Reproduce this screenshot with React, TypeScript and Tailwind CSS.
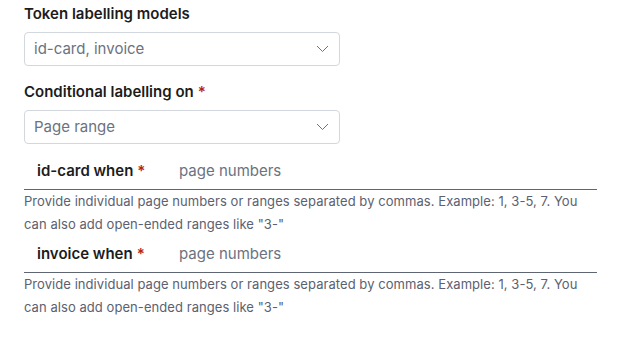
import React from "react";

const Chevron: React.FC = () => (
  <svg width="13" height="8" viewBox="0 0 13 8" fill="none" className="shrink-0">
    <polyline points="1,1 6.5,6.5 12,1" stroke="#6b7280" strokeWidth="1" />
  </svg>
);

const Select: React.FC<{ value: string }> = ({ value }) => (
  <div className="mt-2 flex h-[34px] w-[316px] items-center justify-between rounded-[4px] border border-[#d3d7de] bg-white pl-[9px] pr-[10px]">
    <span className="text-[15px] leading-5 text-[#6b7280]">{value}</span>
    <Chevron />
  </div>
);

const Star = () => <span className="ml-1 text-[#b42318]">*</span>;

const PageRow: React.FC<{ label: string; first?: boolean }> = ({ label, first }) => (
  <div>
    <div
      className={`flex items-center border-b border-[#5f6673] pl-[13px] pt-2 pb-2 ${
        first ? "mt-[9px]" : ""
      }`}
    >
      <label className="w-[142px] text-[15px] font-semibold leading-5 text-[#1c1c1c]">
        {label}
        <Star />
      </label>
      <input
        className="flex-1 bg-transparent text-[15px] leading-5 text-[#1c1c1c] outline-none placeholder:text-[#6b7280]"
        placeholder="page numbers"
      />
    </div>
    <p className="text-[13px] leading-[23px] tracking-[0.06px] text-[#5b6170]">
      Provide individual page numbers or ranges separated by commas. Example: 1, 3-5, 7. You
      can also add open-ended ranges like "3-"
    </p>
  </div>
);

const App: React.FC = () => {
  return (
    <div className="min-h-screen bg-white font-['Inter',sans-serif]">
      <div className="w-[597px] pl-6 pt-1">
        <h3 className="text-[15px] font-semibold leading-5 text-[#1c1c1c]">
          Token labelling models
        </h3>
        <Select value="id-card, invoice" />

        <h3 className="mt-4 text-[15px] font-semibold leading-5 text-[#1c1c1c]">
          Conditional labelling on
          <Star />
        </h3>
        <Select value="Page range" />

        <PageRow label="id-card when" first />
        <PageRow label="invoice when" />
      </div>
    </div>
  );
};

export default App;
